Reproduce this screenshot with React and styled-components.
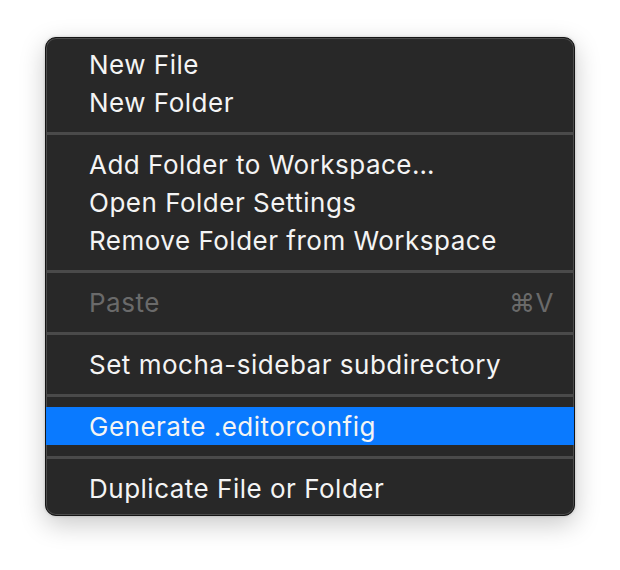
import React from "react";
import styled, { createGlobalStyle } from "styled-components";

const Global = createGlobalStyle`
  html, body {
    margin: 0;
    background: #ffffff;
  }
  body {
    font-family: Inter, "Liberation Sans", sans-serif;
  }
`;

const Page = styled.div`
  width: 620px;
  height: 570px;
  padding: 37px 0 0 45px;
  box-sizing: border-box;
`;

const Menu = styled.ul`
  width: 530px;
  margin: 0;
  padding: 7px 0 8px;
  list-style: none;
  box-sizing: border-box;
  background: #282828;
  border: 1px solid #151515;
  border-radius: 11px;
  box-shadow: inset 0 0 0 1px #4c4c4c, 0 8px 26px rgba(0, 0, 0, 0.22),
    0 0 3px rgba(0, 0, 0, 0.18);
  overflow: hidden;
`;

const Item = styled.li`
  display: flex;
  align-items: center;
  justify-content: space-between;
  height: 38px;
  padding: 0 20px 0 43px;
  font-size: 26px;
  letter-spacing: 0.5px;
  color: ${(p) => (p.$disabled ? "#6a6a6a" : "#f4f4f4")};
  background: ${(p) => (p.$active ? "#0a7aff" : "transparent")};
  white-space: nowrap;
`;

const Shortcut = styled.span`
  color: #6a6a6a;
`;

const Separator = styled.li`
  height: 24px;
  display: flex;
  align-items: center;
  &::before {
    content: "";
    display: block;
    width: 100%;
    height: 3px;
    background: #4a4a4a;
  }
`;

const groups = [
  [{ label: "New File" }, { label: "New Folder" }],
  [
    { label: "Add Folder to Workspace…" },
    { label: "Open Folder Settings" },
    { label: "Remove Folder from Workspace" },
  ],
  [{ label: "Paste", disabled: true, shortcut: "⌘V" }],
  [{ label: "Set mocha-sidebar subdirectory" }],
  [{ label: "Generate .editorconfig", active: true }],
  [{ label: "Duplicate File or Folder" }],
];

export default function App() {
  return (
    <>
      <Global />
      <Page>
        <Menu>
          {groups.map((group, gi) => (
            <React.Fragment key={gi}>
              {gi > 0 && <Separator />}
              {group.map((it) => (
                <Item key={it.label} $disabled={it.disabled} $active={it.active}>
                  <span>{it.label}</span>
                  {it.shortcut && <Shortcut>{it.shortcut}</Shortcut>}
                </Item>
              ))}
            </React.Fragment>
          ))}
        </Menu>
      </Page>
    </>
  );
}
